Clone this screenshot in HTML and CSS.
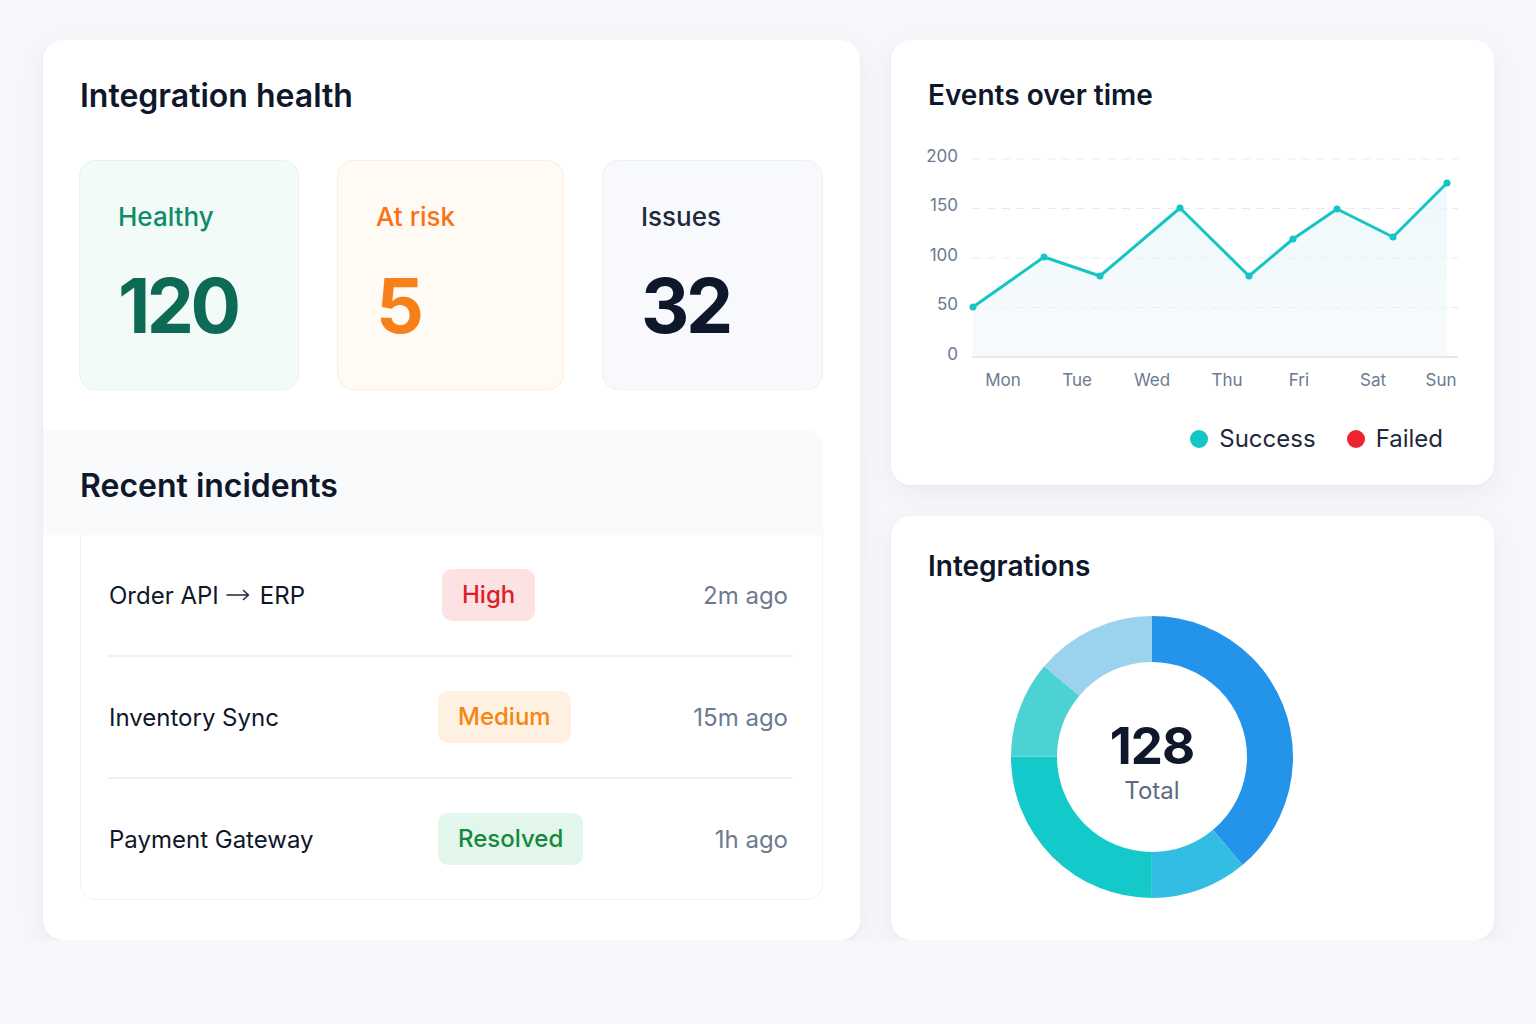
FILE: index.html
```
<!DOCTYPE html>
<html lang="en">
<head>
    <meta charset="UTF-8">
    <meta name="viewport" content="width=device-width, initial-scale=1.0">
    <title>Integration health</title>
    <link rel="stylesheet" href="styles.css">
</head>
<body>
    <div class="dashboard">
        <!-- left: health stats and incidents -->
        <section class="card health">
            <h2 class="card-title">Integration health</h2>
            <div class="stats">
                <div class="stat stat-healthy">
                    <div class="stat-label">Healthy</div>
                    <div class="stat-value">120</div>
                </div>
                <div class="stat stat-risk">
                    <div class="stat-label">At risk</div>
                    <div class="stat-value">5</div>
                </div>
                <div class="stat stat-issues">
                    <div class="stat-label">Issues</div>
                    <div class="stat-value">32</div>
                </div>
            </div>

            <div class="incidents-head">
                <h2 class="card-title">Recent incidents</h2>
            </div>
            <div class="incidents">
                <div class="incident">
                    <span class="incident-name">Order API<svg class="arrow" width="24" height="12" viewBox="0 0 24 12"><path d="M1 6H22.5M17.5 1.5L22.5 6L17.5 10.5"/></svg>ERP</span>
                    <span><span class="badge badge-high">High</span></span>
                    <span class="incident-time">2m ago</span>
                </div>
                <div class="incident">
                    <span class="incident-name">Inventory Sync</span>
                    <span><span class="badge badge-medium">Medium</span></span>
                    <span class="incident-time">15m ago</span>
                </div>
                <div class="incident">
                    <span class="incident-name">Payment Gateway</span>
                    <span><span class="badge badge-resolved">Resolved</span></span>
                    <span class="incident-time">1h ago</span>
                </div>
            </div>
        </section>

        <div class="side">
            <!-- events line chart -->
            <section class="card events">
                <h2 class="card-title small">Events over time</h2>
                <svg class="chart" width="532" height="255" viewBox="0 0 532 255">
                    <defs>
                        <linearGradient id="areaFill" x1="0" y1="0" x2="0" y2="1">
                            <stop offset="0" stop-color="#e1f5f8" stop-opacity="0.6"/>
                            <stop offset="1" stop-color="#eef5fb" stop-opacity="0.45"/>
                        </linearGradient>
                    </defs>
                    <g class="grid">
                        <line x1="44" y1="19" x2="530" y2="19"/>
                        <line x1="44" y1="68.5" x2="530" y2="68.5"/>
                        <line x1="44" y1="118" x2="530" y2="118"/>
                        <line x1="44" y1="167.5" x2="530" y2="167.5"/>
                    </g>
                    <line class="axis" x1="44" y1="217" x2="530" y2="217"/>
                    <g class="y-labels">
                        <text x="30" y="22">200</text>
                        <text x="30" y="71">150</text>
                        <text x="30" y="121">100</text>
                        <text x="30" y="170">50</text>
                        <text x="30" y="220">0</text>
                    </g>
                    <polygon class="area" points="45,167 116,117 172,136 252,68 321,136 365,99 409,69 465,97 519,43 519,217 45,217"/>
                    <polyline class="line" points="45,167 116,117 172,136 252,68 321,136 365,99 409,69 465,97 519,43"/>
                    <g class="dots">
                        <circle cx="45" cy="167" r="3.5"/>
                        <circle cx="116" cy="117" r="3.5"/>
                        <circle cx="172" cy="136" r="3.5"/>
                        <circle cx="252" cy="68" r="3.5"/>
                        <circle cx="321" cy="136" r="3.5"/>
                        <circle cx="365" cy="99" r="3.5"/>
                        <circle cx="409" cy="69" r="3.5"/>
                        <circle cx="465" cy="97" r="3.5"/>
                        <circle cx="519" cy="43" r="3.5"/>
                    </g>
                    <g class="x-labels">
                        <text x="75" y="246">Mon</text>
                        <text x="149" y="246">Tue</text>
                        <text x="224" y="246">Wed</text>
                        <text x="299" y="246">Thu</text>
                        <text x="371" y="246">Fri</text>
                        <text x="445" y="246">Sat</text>
                        <text x="513" y="246">Sun</text>
                    </g>
                </svg>
                <div class="legend">
                    <span class="legend-item"><span class="dot dot-success"></span>Success</span>
                    <span class="legend-item"><span class="dot dot-failed"></span>Failed</span>
                </div>
            </section>

            <!-- integrations donut -->
            <section class="card integrations">
                <h2 class="card-title small">Integrations</h2>
                <svg class="donut" width="282" height="282" viewBox="0 0 282 282">
                    <g transform="rotate(-90 141 141)" fill="none" stroke-width="46">
                        <circle cx="141" cy="141" r="118" stroke="#2493ea" stroke-dasharray="288.33 741.42" stroke-dashoffset="0"/>
                        <circle cx="141" cy="141" r="118" stroke="#34bde3" stroke-dasharray="82.38 741.42" stroke-dashoffset="-288.33"/>
                        <circle cx="141" cy="141" r="118" stroke="#14c9ca" stroke-dasharray="185.35 741.42" stroke-dashoffset="-370.71"/>
                        <circle cx="141" cy="141" r="118" stroke="#4dd2d3" stroke-dasharray="82.38 741.42" stroke-dashoffset="-556.06"/>
                        <circle cx="141" cy="141" r="118" stroke="#9bd3ee" stroke-dasharray="102.97 741.42" stroke-dashoffset="-638.44"/>
                    </g>
                    <text class="donut-value" x="141" y="148">128</text>
                    <text class="donut-label" x="141" y="183">Total</text>
                </svg>
            </section>
        </div>
    </div>
</body>
</html>
```

FILE: styles.css
```
body {
    margin: 0;
    background-color: #f5f7fa;
    font-family: Inter, "Noto Sans", sans-serif;
    color: #0f172a;
}
.dashboard {
    display: grid;
    grid-template-columns: 817px 603px;
    gap: 31px;
    padding: 40px 0 0 43px;
}
.card {
    background-color: #fff;
    border-radius: 20px;
    box-shadow: 0 8px 28px rgba(15, 23, 42, 0.05), 0 1px 2px rgba(15, 23, 42, 0.03);
}
.card-title {
    margin: 0;
    font-size: 32px;
    line-height: 40px;
    font-weight: 600;
    color: #0f172a;
}
.card-title.small {
    font-size: 28px;
    line-height: 36px;
}

/* left card */
.health {
    height: 900px;
    box-sizing: border-box;
    padding: 36px 37px 41px;
}
.stats {
    display: grid;
    grid-template-columns: 220px 227px 221px;
    gap: 38px;
    margin: 44px -2px 40px -1px;
}
.stat {
    height: 230px;
    box-sizing: border-box;
    padding: 40px 38px 0;
    border-radius: 16px;
    border: 1px solid;
}
.stat-label {
    font-size: 26px;
    line-height: 32px;
    font-weight: 500;
}
.stat-value {
    margin-top: 34px;
    font-size: 75px;
    line-height: 77px;
    font-weight: 700;
    letter-spacing: -3.5px;
}
.stat-healthy {
    background-color: #f2fbf7;
    border-color: #e5f4ed;
}
.stat-healthy .stat-label { color: #0e8c6c; }
.stat-healthy .stat-value { color: #0d6a55; }
.stat-risk {
    background-color: #fffaf4;
    border-color: #fdeedd;
}
.stat-risk .stat-label { color: #f97316; }
.stat-risk .stat-value { color: #f7801a; }
.stat-issues {
    background-color: #f7f9fc;
    border-color: #edf0f5;
}
.stat-issues .stat-label { color: #1e293b; }
.stat-issues .stat-value { color: #0f172a; }

.incidents-head {
    margin-left: -37px;
    padding: 36px 37px 29px;
    background-color: #f8fafc;
    border-top-right-radius: 16px;
}
.incidents {
    padding: 0 29px 0 26px;
    border: 1px solid #f1f3f7;
    border-top: none;
    border-radius: 0 0 16px 16px;
    background-color: #fff;
}
.incident {
    display: grid;
    grid-template-columns: 329px 1fr auto;
    align-items: center;
    height: 120px;
    padding: 0 5px 0 2px;
    border-bottom: 2px solid #eef1f5;
    font-size: 24px;
}
.incident:last-child {
    border-bottom: none;
}
.incident-name {
    color: #0f172a;
}
.arrow {
    margin: 0 10px 0 7px;
    vertical-align: 3px;
    fill: none;
    stroke: #1e293b;
    stroke-width: 1.5;
    stroke-linecap: round;
    stroke-linejoin: round;
}
.incident-time {
    color: #6b7a92;
}
.badge {
    display: inline-block;
    height: 52px;
    line-height: 52px;
    padding: 0 20px;
    border-radius: 10px;
    font-weight: 500;
}
.badge-high {
    background-color: #fde2e4;
    color: #dc1f26;
    margin-left: 4px;
}
.badge-medium {
    background-color: #fff1e2;
    color: #f5860f;
}
.badge-resolved {
    background-color: #e3f6eb;
    color: #16883a;
}

/* right column */
.side {
    display: flex;
    flex-direction: column;
    gap: 31px;
}
.events {
    height: 445px;
    box-sizing: border-box;
    padding: 37px 51px 0 37px;
}
.chart {
    display: block;
    margin-top: 27px;
    overflow: visible;
}
.chart text {
    font-family: Inter, "Noto Sans", sans-serif;
    font-size: 17px;
    fill: #6b7a92;
}
.y-labels text {
    text-anchor: end;
}
.x-labels text {
    text-anchor: middle;
}
.grid line {
    stroke: #e6eaf0;
    stroke-width: 1;
    stroke-dasharray: 8 7;
}
.axis {
    stroke: #d8dee7;
    stroke-width: 1.5;
}
.area {
    fill: url(#areaFill);
}
.line {
    fill: none;
    stroke: #16c4c4;
    stroke-width: 3;
    stroke-linejoin: round;
}
.dots circle {
    fill: #16c4c4;
}
.legend {
    display: flex;
    justify-content: flex-end;
    gap: 31px;
    margin-top: 29px;
    font-size: 24px;
    line-height: 30px;
    color: #1e293b;
}
.legend-item {
    display: flex;
    align-items: center;
    gap: 11px;
}
.dot {
    width: 18px;
    height: 18px;
    border-radius: 50%;
}
.dot-success { background-color: #14c6c6; }
.dot-failed { background-color: #ee2430; }

.integrations {
    height: 424px;
    box-sizing: border-box;
    padding: 32px 37px 0;
}
.donut {
    display: block;
    margin: 32px 0 0 83px;
}
.donut text {
    font-family: Inter, "Noto Sans", sans-serif;
    text-anchor: middle;
}
.donut-value {
    font-size: 51px;
    font-weight: 700;
    letter-spacing: -1px;
    fill: #0f172a;
}
.donut-label {
    font-size: 24px;
    fill: #5b6b82;
}
```
